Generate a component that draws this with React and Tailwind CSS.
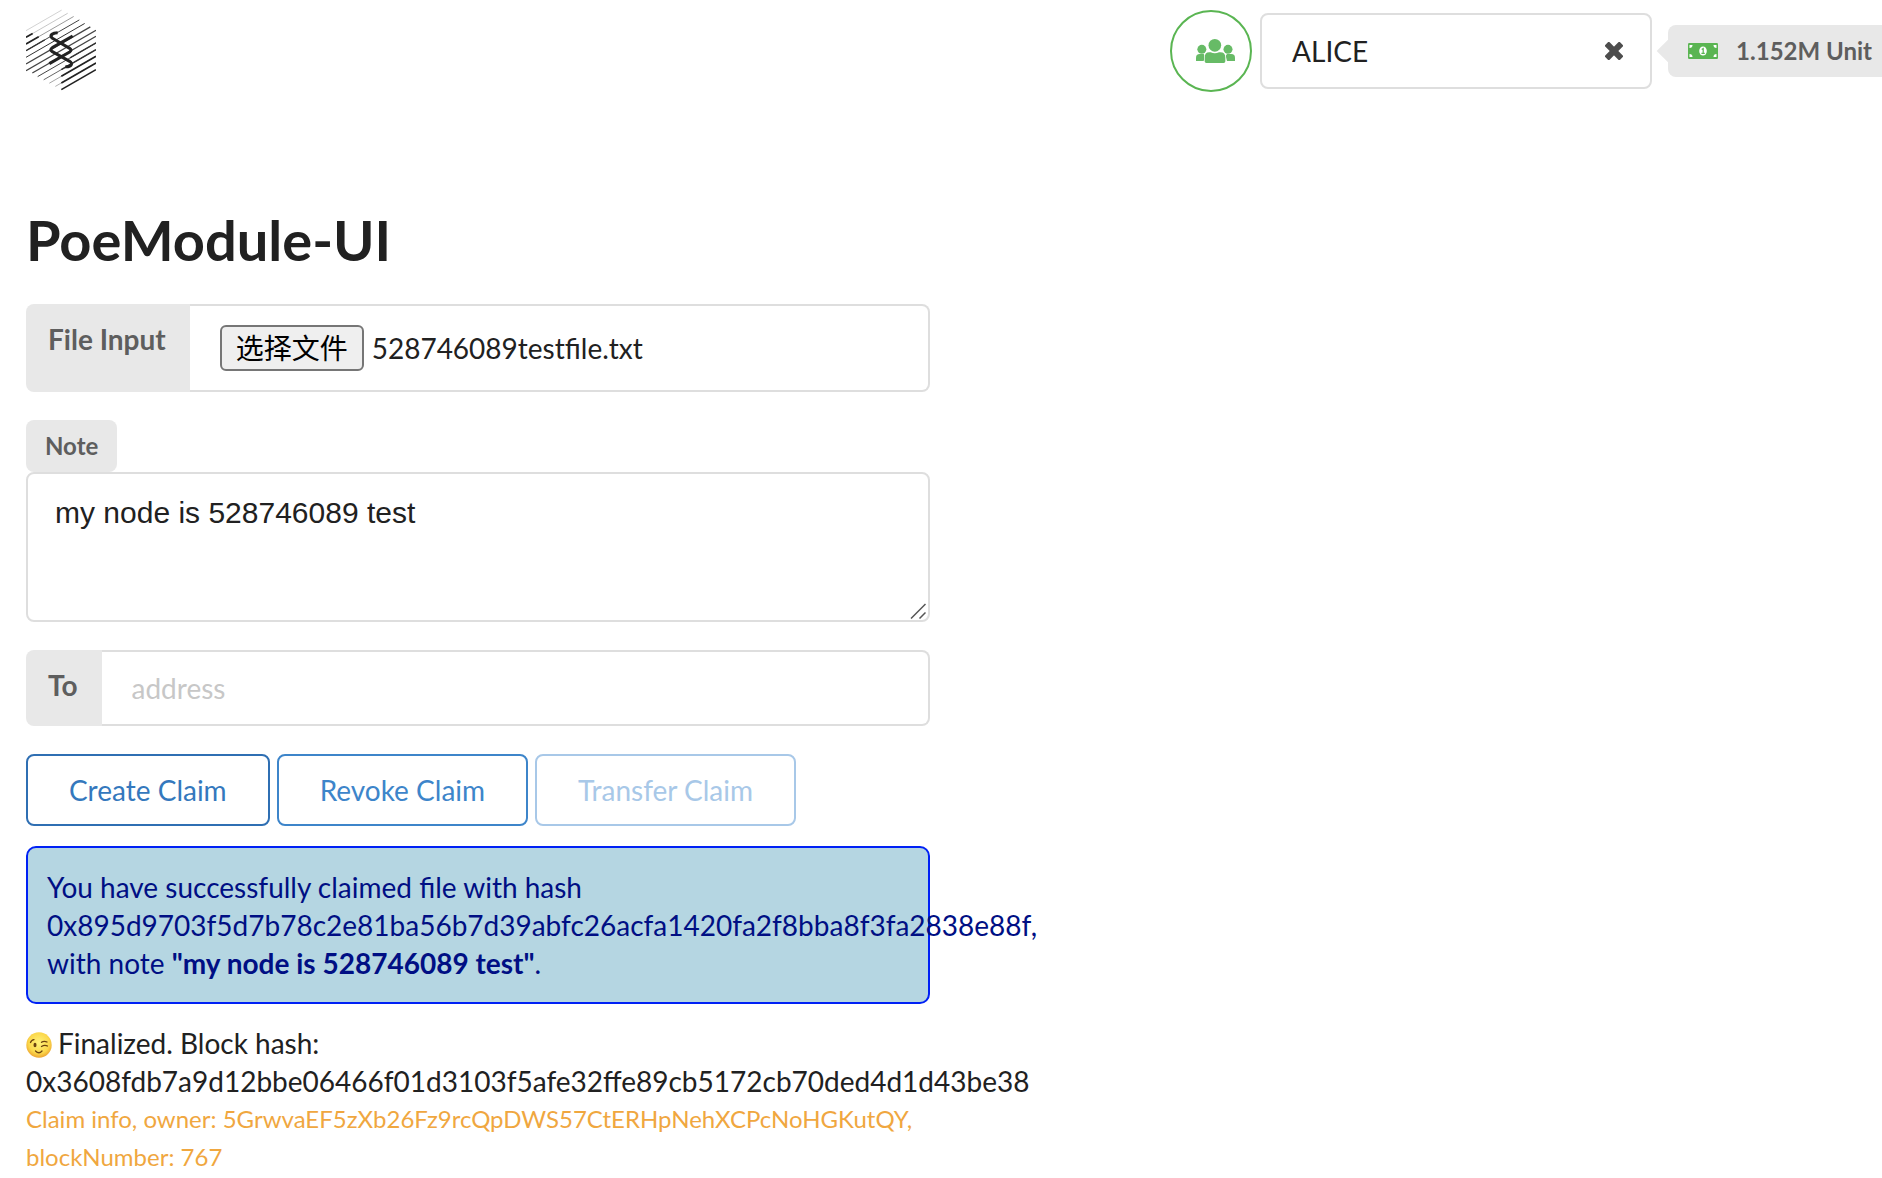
import React from "react";

// Hatching of the hexagonal logo: [x1, x2, intercept on the left edge, stroke width, shade]
const HATCH = [
  [78, 185, 92, 2, "#bbb"],
  [78, 203, 112, 2, "#aaa"],
  [78, 221, 132, 2, "#666"],
  [78, 238, 152, 3, "#444"],
  [78, 254, 172, 3, "#333"],
  [78, 271, 192, 4, "#444"],
  [78, 288, 212, 4, "#444"],
  [97, 288, 230, 4, "#444"],
  [113, 288, 250, 3, "#444"],
  [131, 288, 270, 3, "#666"],
  [148, 288, 290, 2, "#777"],
  [166, 288, 310, 2, "#888"],
  [78, 98, 112, 5, "#222"],
  [78, 116, 132, 5, "#222"],
  [78, 134, 152, 4, "#333"],
  [210, 288, 250, 4, "#333"],
  [184, 288, 270, 5, "#333"],
  [184, 288, 290, 5, "#222"],
  [184, 288, 310, 5, "#222"],
  [184, 288, 330, 5, "#222"],
];

const SLOPE = 0.577;

function Logo() {
  return (
    <svg viewBox="78 24 210 249" className="h-[83px] w-[70px]" role="img" aria-label="Substrate">
      {HATCH.map(([x1, x2, y, width, shade], i) => (
        <line
          key={i}
          x1={x1}
          x2={x2}
          y1={y - (x1 - 78) * SLOPE}
          y2={y - (x2 - 78) * SLOPE}
          strokeWidth={width}
          stroke={shade}
        />
      ))}
      <g fill="none" stroke="#222" strokeWidth="9" strokeLinejoin="round">
        <path d="M173 98C158 98 148 104 156 114L209 145Q217 150 209 156L148 191" />
        <path d="M218 108L157 143Q148 149 157 155L209 184C220 191 214 201 196 200" />
      </g>
    </svg>
  );
}

function UsersIcon() {
  return (
    <svg viewBox="138 120 117 72" className="ml-2 h-6 w-[39px]" fill="#67bb66" aria-hidden="true">
      <circle cx="155.500" cy="151" r="13.500" />
      <circle cx="234" cy="151" r="13.500" />
      <path d="M138 186V176Q138 165 149 165H161L165 170L161 186Z" />
      <path d="M255 186V176Q255 165 244 165H231L227 170L231 186Z" />
      <circle cx="194.500" cy="139" r="19" />
      <path
        d="M162 194V174Q162 157 178 157H183Q194.500 163 206 157H211Q228 157 228 174V194Z"
        fill="#fff"
      />
      <path d="M164 187V176Q164 160 178 160H182Q194.500 166 207 160H211Q226 160 226 176V187Q226 192 221 192H169Q164 192 164 187Z" />
    </svg>
  );
}

function ClearIcon() {
  return (
    <svg viewBox="0 0 18 18" className="size-[18px]" fill="#4d4d4d" aria-hidden="true">
      <g transform="rotate(45 9 9)">
        <rect x="-1.500" y="5.900" width="21" height="6.200" rx="1.200" />
        <rect x="5.900" y="-1.500" width="6.200" height="21" rx="1.200" />
      </g>
    </svg>
  );
}

function MoneyIcon() {
  return (
    <svg viewBox="0 0 30 16" className="h-4 w-[30px]" aria-hidden="true">
      <rect width="30" height="16" rx="1.200" fill="#5ab552" />
      <g fill="#fff">
        <path d="M1.500 2H4.500A3 3 0 0 1 1.500 5Z" />
        <path d="M28.500 2H25.500A3 3 0 0 0 28.500 5Z" />
        <path d="M1.500 14H4.500A3 3 0 0 0 1.500 11Z" />
        <path d="M28.500 14H25.500A3 3 0 0 1 28.500 11Z" />
        <ellipse cx="15" cy="8" rx="3.800" ry="4.600" />
      </g>
      <path d="M13.700 6.400L15.200 5.500V10.200M13.400 10.300H16.800" fill="none" stroke="#5ab552" strokeWidth="1.200" />
    </svg>
  );
}

function WinkIcon() {
  return (
    <svg viewBox="0 0 26 26" className="mr-[6px] inline-block size-[26px] align-[-4px]" role="img" aria-label="Winking face">
      <defs>
        <radialGradient id="face" cx="50%" cy="42%" r="58%">
          <stop offset="0" stopColor="#fff27a" />
          <stop offset="0.700" stopColor="#fbd84b" />
          <stop offset="1" stopColor="#eda531" />
        </radialGradient>
      </defs>
      <circle cx="13" cy="13" r="12.700" fill="url(#face)" />
      <ellipse cx="9" cy="13" rx="1.500" ry="2.300" fill="#6b4210" />
      <g fill="none" stroke="#6b4210" strokeWidth="1.300" strokeLinecap="round">
        <path d="M4.500 10.500Q5.500 7.800 8 7.600" />
        <path d="M15.500 10.300Q18 8.500 21 10" />
        <path d="M15.500 14.500Q18.500 12.500 21.500 14" />
        <path d="M9.500 19Q13 22.500 16 19" />
      </g>
    </svg>
  );
}

function ResizeGrip() {
  return (
    <svg
      viewBox="0 0 16 16"
      className="pointer-events-none absolute right-1 bottom-[3px] size-4"
      stroke="#555"
      strokeWidth="1.500"
      aria-hidden="true"
    >
      <path d="M1 15.500L15.500 1M9.500 15.500L15.500 9.500" />
    </svg>
  );
}

const fieldLabel = "shrink-0 rounded-l-lg bg-[#e8e8e8] pr-6 pl-[22px] font-bold text-[#5e5e5e]";
const fieldBody = "min-w-0 flex-1 rounded-r-lg border-2 border-l-0 border-[#dedede]";
const claimButton = "h-[72px] rounded-lg border-2 px-[41px]";

export default function App() {
  return (
    <div className="overflow-x-clip bg-white font-['Lato','Noto_Sans_CJK_SC',sans-serif] text-[28px] leading-[38px] text-[#212121]">
      <header className="flex items-start justify-between pt-2 pl-[26px]">
        <a href="#home">
          <Logo />
        </a>
        <div className="flex items-center gap-2 pt-[2px]">
          <button
            type="button"
            aria-label="Accounts"
            className="flex size-[82px] items-center justify-center rounded-full border-2 border-[#5ab552]"
          >
            <UsersIcon />
          </button>
          <div className="flex h-[76px] w-[392px] items-center rounded-lg border-2 border-[#dedede] pr-[27px] pl-[30px]">
            <select aria-label="Account" className="min-w-0 flex-1 appearance-none bg-transparent outline-none">
              <option>ALICE</option>
            </select>
            <button type="button" aria-label="Clear account">
              <ClearIcon />
            </button>
          </div>
          <div className="relative ml-2 flex h-[52px] items-center gap-[18px] rounded-l-lg bg-[#e8e8e8] pr-[10px] pl-5 text-2xl font-bold text-[#5e5e5e]">
            <span className="absolute top-1/2 -left-2 size-4 -translate-y-1/2 rotate-45 bg-[#e8e8e8]" />
            <MoneyIcon />
            <span>1.152M Unit</span>
          </div>
        </div>
      </header>

      <main className="w-1/2 pr-[11px] pl-[26px]">
        <h1 className="mt-28 text-[56px] leading-[72px] font-bold">PoeModule-UI</h1>

        <form className="mt-7" onSubmit={(e) => e.preventDefault()}>
          <div className="flex h-[88px]">
            <label htmlFor="file" className={`${fieldLabel} pt-4`}>
              File Input
            </label>
            <div className={`${fieldBody} flex items-center pl-[30px]`}>
              <input id="file" type="file" className="sr-only" />
              <label
                htmlFor="file"
                className="mr-2 flex h-[46px] items-center rounded-md border-2 border-[#767676] bg-[#efefef] px-[14px] text-black"
              >
                选择文件
              </label>
              <span>528746089testfile.txt</span>
            </div>
          </div>

          <div className="mt-7">
            <label
              htmlFor="note"
              className="flex h-[52px] w-fit items-center rounded-lg bg-[#e8e8e8] px-[19px] text-2xl font-bold text-[#5e5e5e]"
            >
              Note
            </label>
            <div className="relative">
              <textarea
                id="note"
                className="block h-[150px] w-full rounded-lg border-2 border-[#dedede] px-[27px] py-5 font-['Liberation_Sans',sans-serif] text-[30px] outline-none [&::-webkit-resizer]:hidden"
                defaultValue="my node is 528746089 test"
              />
              <ResizeGrip />
            </div>
          </div>

          <div className="mt-7 flex h-[76px]">
            <label htmlFor="address" className={`${fieldLabel} pt-4`}>
              To
            </label>
            <input
              id="address"
              type="text"
              placeholder="address"
              className={`${fieldBody} pl-[30px] outline-none placeholder:text-[#c7c7c7]`}
            />
          </div>

          <div className="mt-7 flex gap-[7px]">
            <button type="button" className={`${claimButton} border-[#2f6fb3] text-[#3478bd]`}>
              Create Claim
            </button>
            <button type="button" className={`${claimButton} border-[#3d85ca] text-[#3d85ca]`}>
              Revoke Claim
            </button>
            <button type="button" disabled className={`${claimButton} border-[#a8c8e8] text-[#a8c8e8]`}>
              Transfer Claim
            </button>
          </div>
        </form>

        <div className="mt-5 rounded-[10px] border-2 border-[#0021f5] bg-[#b5d6e2] px-[19px] py-5 text-[#000f84]">
          You have successfully claimed file with hash
          0x895d9703f5d7b78c2e81ba56b7d39abfc26acfa1420fa2f8bba8f3fa2838e88f, with note{" "}
          <b>"my node is 528746089 test"</b>.
        </div>

        <div className="mt-5">
          <p>
            <WinkIcon />
            Finalized. Block hash: 0x3608fdb7a9d12bbe06466f01d3103f5afe32ffe89cb5172cb70ded4d1d43be38
          </p>
          <p className="text-2xl leading-[38px] text-[#f0a73f]">
            Claim info, owner: 5GrwvaEF5zXb26Fz9rcQpDWS57CtERHpNehXCPcNoHGKutQY, blockNumber: 767
          </p>
        </div>
      </main>
    </div>
  );
}
